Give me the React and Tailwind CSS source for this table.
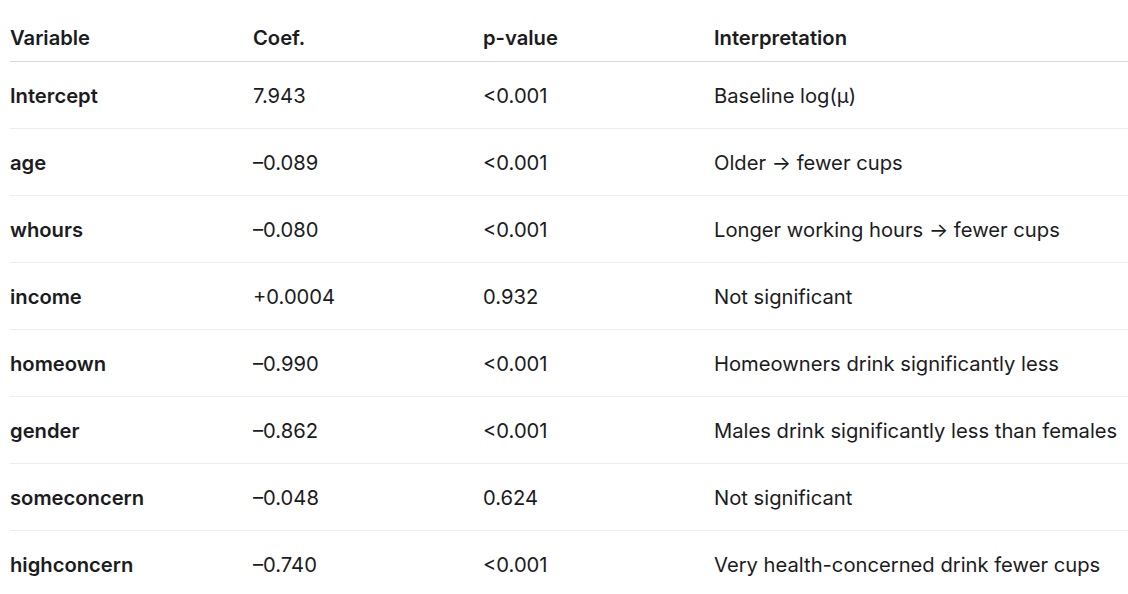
import React from "react";

const rows = [
  ["Intercept", "7.943", "<0.001", "Baseline log(μ)"],
  ["age", "\u20130.089", "<0.001", "Older \u2192 fewer cups"],
  ["whours", "\u20130.080", "<0.001", "Longer working hours \u2192 fewer cups"],
  ["income", "+0.0004", "0.932", "Not significant"],
  ["homeown", "\u20130.990", "<0.001", "Homeowners drink significantly less"],
  ["gender", "\u20130.862", "<0.001", "Males drink significantly less than females"],
  ["someconcern", "\u20130.048", "0.624", "Not significant"],
  ["highconcern", "\u20130.740", "<0.001", "Very health-concerned drink fewer cups"],
];

const cols = "grid grid-cols-[243px_230px_231px_1fr]";

export default function App() {
  return (
    <div
      className="bg-white text-[#1c1c1e] text-[20.2px] pl-[10px] pt-[16px]"
      style={{ fontFamily: "Inter, 'Liberation Sans', sans-serif" }}
    >
      <div className={`${cols} h-[46px] items-center font-semibold border-b border-[#d9d9d9]`}>
        <div>Variable</div>
        <div>Coef.</div>
        <div>p-value</div>
        <div>Interpretation</div>
      </div>
      {rows.map((r, i) => (
        <div
          key={i}
          className={`${cols} h-[67px] items-center pt-[2px] border-b border-[#ededed]`}
        >
          <div className="font-semibold">{r[0]}</div>
          <div>{r[1]}</div>
          <div>{r[2]}</div>
          <div className="whitespace-nowrap">{r[3]}</div>
        </div>
      ))}
    </div>
  );
}
